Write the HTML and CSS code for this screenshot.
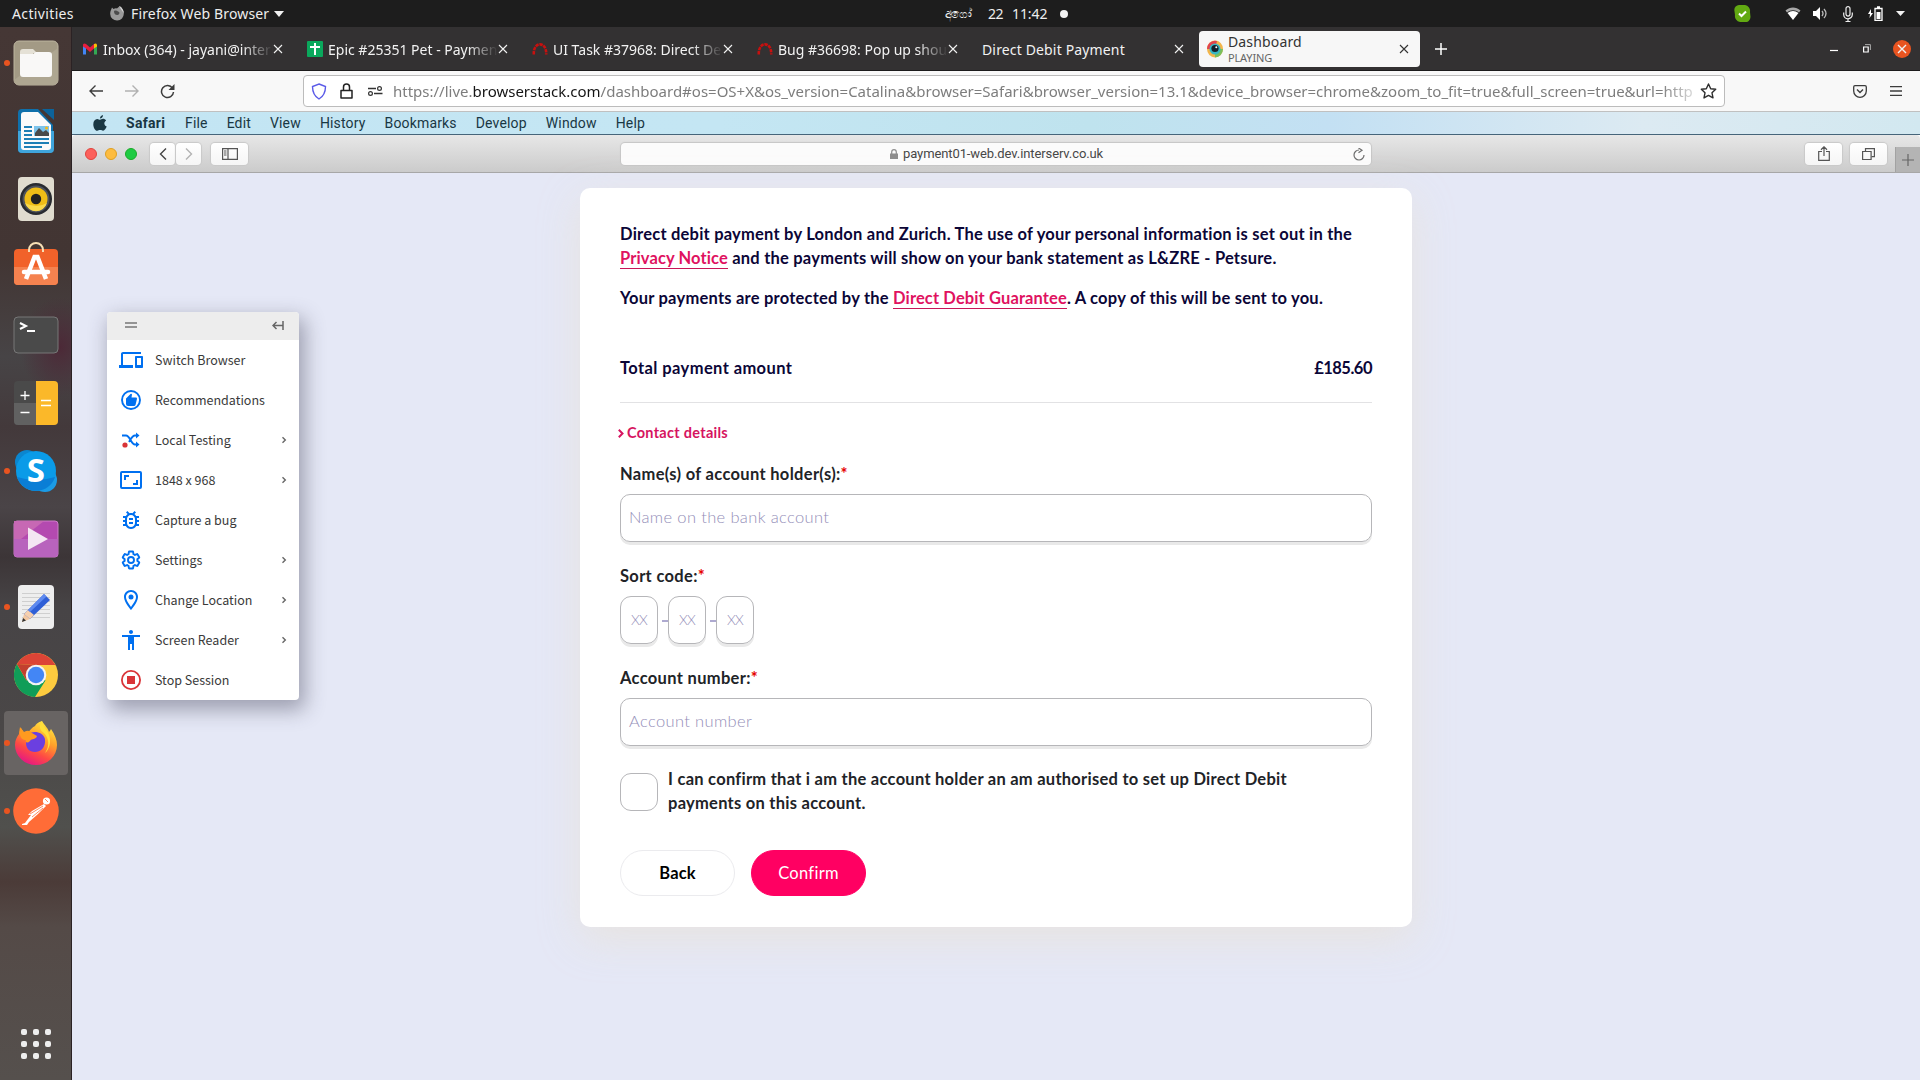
FILE: index.html
```html
<!DOCTYPE html>
<html lang="en">
<head>
<meta charset="utf-8">
<title>Dashboard</title>
<link rel="stylesheet" href="styles.css">
</head>
<body>
<div class="desktop">
  <header class="topbar">
    <div class="topbar-left">
      <span class="activities">Activities</span>
      <svg class="ff-mono" width="14" height="15" viewBox="0 0 14 15"><path d="M1 4l1-2.500 1.500 1.500C5 2 6 2 7 2.500 8 1.500 9 1 9.500 0c3 2 4.300 4.500 4.300 7.500A6.800 6.800 0 0 1 .2 8C.2 6.500.5 5 1 4z" fill="#9a9a9a"/><path d="M4 5c1.500-.8 3-.5 4 .5 2 .3 2 3-.5 3.500C5 9 4 7.500 4 5z" fill="#4c4c4c"/><path d="M9.500 0c3 2 4.300 4.500 4.300 7.500C13 5 11 4.500 9.500 0z" fill="#d5d5d5"/></svg>
      <span class="appname">Firefox Web Browser</span>
      <svg width="10" height="6" viewBox="0 0 10 6"><path d="M0 0h10L5 6z" fill="#f2f2f2"/></svg>
    </div>
    <div class="clock"><span class="month">අගෝ</span><span>22</span><span>11:42</span><i class="notify"></i></div>
    <div class="tray">
      <svg class="t-skype" width="17" height="17" viewBox="0 0 17 17"><path d="M5 0h6a6 6 0 0 1 5 7l.5 5a5 5 0 0 1-6 5H6a6 6 0 0 1-5-7L.3 5A5 5 0 0 1 5 0z" fill="#62a912"/><path d="M5 8.500l2.500 2.500L12 6.500" stroke="#fff" stroke-width="2" fill="none"/></svg>
      <svg class="t-wifi" width="16" height="13" viewBox="0 0 16 13"><path d="M.5 3.500C5-.5 11-.5 15.500 3.500L14 5.500c-3.500-3-8.500-3-12 0z" fill="#a8a8a8"/><path d="M2.500 6c3.300-2.700 7.700-2.700 11 0L8 13z" fill="#fff"/></svg>
      <svg class="t-vol" width="15" height="13" viewBox="0 0 15 13"><path d="M0 4h3l4-4v13L3 9H0z" fill="#fff"/><path d="M9 4q2 2.500 0 5M11 2q4 4.500 0 9" stroke="#bbb" stroke-width="1.300" fill="none"/></svg>
      <svg class="t-mic" width="10" height="16" viewBox="0 0 10 16"><rect x="3" y=".6" width="4" height="9.500" rx="2" fill="none" stroke="#eee" stroke-width="1.200"/><path d="M.7 6.500v2a4.300 4.300 0 0 0 8.600 0v-2M5 13v3M2.500 15.500h5" fill="none" stroke="#eee" stroke-width="1.200"/></svg>
      <svg class="t-bat" width="15" height="15" viewBox="0 0 15 15"><path d="M3 3L0 8h2l-.5 4L5 7H3z" fill="#fff"/><path d="M7 2.500h7v12H7zM9 1h3" stroke="#fff" stroke-width="1.300" fill="none"/><path d="M8.500 6h4v7h-4z" fill="#fff"/></svg>
      <svg width="9" height="5" viewBox="0 0 9 5"><path d="M0 0h9L4.500 5z" fill="#f2f2f2"/></svg>
    </div>
  </header>

  <div class="below">
    <nav class="dock">
      <div class="dock-item running"><svg width="46" height="46" viewBox="0 0 46 46"><rect x="1" y="1" width="44" height="44" rx="5" fill="#a39a85" stroke="#bdb5a0"/><path d="M1 40L45 8v32a5 5 0 0 1-5 5H6a5 5 0 0 1-5-5z" fill="#aea691"/><path d="M7 12q0-3 3-3h10l4 4h-4v4H7z" fill="#e5e1d6"/><path d="M7 14h13l3-2h13q3 0 3 3v19q0 3-3 3H10q-3 0-3-3z" fill="#f9f8f7"/></svg></div>
      <div class="dock-item"><svg width="38" height="46" viewBox="0 0 38 46"><path d="M5 1h16l15 16v24a4 4 0 0 1-4 4H5a4 4 0 0 1-4-4V5a4 4 0 0 1 4-4z" fill="#0f70ab"/><path d="M1 23h36v18a4 4 0 0 1-4 4H5a4 4 0 0 1-4-4z" fill="#3fa5dc"/><path d="M25 1h12v11z" fill="#0c639a"/><path d="M7 4h14l13 13v22q0 3-3 3H7q-3 0-3-3V7q0-3 3-3z" fill="#fafafa"/><path d="M7 19h8M7 23h8M7 27h8M7 31h25M7 35h25M7 39h18" stroke="#1d7fb6" stroke-width="2"/><path d="M17 18h15v10H17z" fill="#7cc4ec"/><path d="M18 28v-3l4-5 4 4 3-2 3 3v3z" fill="#4a4a4a"/><circle cx="29.500" cy="20" r="1.500" fill="#f6b918"/></svg></div>
      <div class="dock-item"><svg width="38" height="46" viewBox="0 0 38 46"><rect x="1" y="1" width="36" height="44" rx="4" fill="#e0dccf"/><circle cx="19" cy="23" r="16" fill="#282b30"/><circle cx="19" cy="23" r="13.500" fill="#4d525c"/><circle cx="19" cy="23" r="11.500" fill="#eebd17"/><path d="M8 27a11.500 11.500 0 0 0 22 0q-10 6-22 0z" fill="#f9d94b"/><circle cx="19" cy="23" r="5.200" fill="#222"/></svg></div>
      <div class="dock-item software"><svg width="46" height="46" viewBox="0 0 46 46"><rect x="1" y="8" width="44" height="36" rx="4" fill="#f1622a"/><path d="M1 26h44v14a4 4 0 0 1-4 4H5a4 4 0 0 1-4-4z" fill="#f5824f"/><path d="M16 11V9a7 7 0 0 1 14 0v2" fill="none" stroke="#f7dfb5" stroke-width="2"/><path d="M13 38l8.500-22h3L33 38" fill="none" stroke="#fff" stroke-width="4.500"/><path d="M11 31h24" stroke="#fff" stroke-width="4.500" stroke-linecap="round"/></svg></div>
      <div class="dock-item"><svg width="46" height="38" viewBox="0 0 46 38"><rect x="1" y="1" width="44" height="36" rx="4" fill="#4a4a4a" stroke="#777"/><path d="M7 7l6 3-6 3M14 15h8" fill="none" stroke="#fff" stroke-width="2"/></svg></div>
      <div class="dock-item"><svg width="46" height="46" viewBox="0 0 46 46"><rect x="1" y="1" width="44" height="44" rx="4" fill="#4a4a4a"/><path d="M1 23h22v22H5a4 4 0 0 1-4-4z" fill="#616161"/><path d="M23 1h18a4 4 0 0 1 4 4v36a4 4 0 0 1-4 4H23z" fill="#fbb829"/><path d="M12 11v9M7.500 15.500h9M7.500 32.500h9M28 20.500h10M28 25.500h10" stroke="#fff" stroke-width="1.300"/></svg></div>
      <div class="dock-item running"><svg class="skype" width="44" height="44" viewBox="0 0 44 44"><circle cx="13" cy="13" r="12" fill="#0b86cf"/><circle cx="31" cy="31" r="12" fill="#1b9be6"/><circle cx="22" cy="22" r="20" fill="#0a9be8"/><path d="M3 28a20 20 0 0 0 38 0q-19 6-38 0z" fill="#0a7ed6"/><text x="22" y="33" class="skype-s">S</text></svg></div>
      <div class="dock-item"><svg width="46" height="38" viewBox="0 0 46 38"><rect x="1" y="1" width="44" height="36" rx="3" fill="#b44ab0" stroke="#cf7fc9"/><path d="M1 1h30L8 19H1z" fill="#c768b4"/><path d="M1 19h44v15a3 3 0 0 1-3 3H4a3 3 0 0 1-3-3z" fill="#b863bd"/><path d="M15 7.500l20 11.500-20 11z" fill="#f4e6f3"/></svg></div>
      <div class="dock-item running"><svg width="38" height="46" viewBox="0 0 38 46"><rect x="1" y="1" width="36" height="44" rx="4" fill="#eee"/><path d="M5 9.500h28M5 13.500h28M5 17.500h28M5 21.500h28M5 25.500h28M5 29.500h28M5 33.500h28" stroke="#cfcfcf"/><path d="M5 38l2-8 6 5z" fill="#f3c7a0"/><path d="M5 38l1-4 3 2.500z" fill="#333"/><path d="M7 30L27 10l6 6-20 19z" fill="#2f5fd6"/><path d="M7 30l4-4 6 5-4 4z" fill="#f6cfae"/><path d="M11 26l16-16 2.500 2.500L13 28z" fill="#5e8af0"/></svg></div>
      <div class="dock-item"><svg width="46" height="46" viewBox="0 0 46 46"><circle cx="23" cy="23" r="22" fill="#fdcb3f"/><path d="M3.900 12A22 22 0 0 0 22 45L32.500 28.500 23 23 13.500 28.500z" fill="#109d58"/><path d="M3.900 12A22 22 0 0 1 42.500 13H23z" fill="#dc4436"/><path d="M3.900 12L13.500 28.500 23 13z" fill="#c2402f"/><circle cx="23" cy="23" r="10.300" fill="#f3f3f3"/><circle cx="23" cy="23" r="8.200" fill="#4386f5"/></svg></div>
      <div class="dock-item running current"><svg width="44" height="46" viewBox="0 0 44 46"><defs><linearGradient id="ffg" x1=".8" y1="0" x2=".3" y2="1"><stop offset="0" stop-color="#fff044"/><stop offset=".4" stop-color="#ffa02a"/><stop offset=".7" stop-color="#ff4a44"/><stop offset="1" stop-color="#e31587"/></linearGradient></defs><path d="M28 1c3 5 6 7 7 11 1-1 2-3 2-3 4 6 6 11 6 16a21 20 0 0 1-42 0c0-5 2-8 4-11 0-2 1-4 2-6l3 5c1 0 2-1 4-1 2-1 4-5 7-6 1-2 3-4 7-5z" fill="url(#ffg)"/><path d="M14 14c6-4 15-2 17 5 1 9-5 13-10 13-6 0-9-4-9-9z" fill="#6b3fe0"/><path d="M6 7l4 5q5-3 8 1l5 3c-1 4-5 2-7 5-3 3-5 1-4-1C8 21 4 15 6 7z" fill="#ff9a1f"/><path d="M28 1c1 8 9 10 8 22-1 7-5 10-5 10 5-7 4-15-1-20-5-3-5-8-2-12z" fill="#ffe03a"/></svg></div>
      <div class="dock-item running"><svg width="46" height="46" viewBox="0 0 46 46"><circle cx="23" cy="23" r="22.800" fill="#ff6c37"/><circle cx="33.500" cy="13" r="3.600" fill="#fff"/><path d="M31 16L19 23l-4 4 3 0-6 8-3 1v1h5l2-3 9-8 8-8z" fill="#fff"/><path d="M17 26l13-8M19 29l11-9M32 11l3 3" stroke="#ff6c37" stroke-width=".8"/></svg></div>
      <div class="dock-grid"><i></i><i></i><i></i><i></i><i></i><i></i><i></i><i></i><i></i></div>
    </nav>

    <main class="window">
      <div class="tabs">
        <div class="tab"><svg class="fav" width="16" height="16" viewBox="0 0 16 16"><path d="M1 4v9.500h3V6z" fill="#4285f4"/><path d="M15 4v9.500h-3V6z" fill="#34a853"/><path d="M1 3.500Q2 2 4 3l4 3.500L12 3v4.500l-4 3.500-4-3.500-3-2z" fill="#ea1d3d"/><path d="M12 3q2-1 3 .5v2l-3 2z" fill="#fbbc04"/></svg><span class="tab-text fade">Inbox (364) - jayani@interblo</span><svg class="x" viewBox="0 0 8 8"><path d="M0 0l8 8M8 0L0 8"/></svg></div>
        <div class="tab"><svg class="fav" width="16" height="16" viewBox="0 0 16 16"><rect width="16" height="16" rx="1" fill="#0aa85c"/><path d="M8 2v12M3 6h10" stroke="#fff" stroke-width="2"/></svg><span class="tab-text fade">Epic #25351 Pet - Payment</span><svg class="x" viewBox="0 0 8 8"><path d="M0 0l8 8M8 0L0 8"/></svg></div>
        <div class="tab"><svg class="fav" width="16" height="16" viewBox="0 0 16 16"><path d="M1.800 13.500C1 0 15 0 14.200 13.500" fill="none" stroke="#c8100f" stroke-width="2.600" stroke-dasharray="3.400 .8"/></svg><span class="tab-text fade">UI Task #37968: Direct Debit</span><svg class="x" viewBox="0 0 8 8"><path d="M0 0l8 8M8 0L0 8"/></svg></div>
        <div class="tab"><svg class="fav" width="16" height="16" viewBox="0 0 16 16"><path d="M1.800 13.500C1 0 15 0 14.200 13.500" fill="none" stroke="#c8100f" stroke-width="2.600" stroke-dasharray="3.400 .8"/></svg><span class="tab-text fade">Bug #36698: Pop up should</span><svg class="x" viewBox="0 0 8 8"><path d="M0 0l8 8M8 0L0 8"/></svg></div>
        <div class="tab plain"><span class="tab-text">Direct Debit Payment</span><svg class="x" viewBox="0 0 8 8"><path d="M0 0l8 8M8 0L0 8"/></svg></div>
        <div class="tab active"><svg class="fav" width="16" height="18" viewBox="0 0 16 18"><ellipse cx="8" cy="9" rx="8" ry="8.500" fill="#f3b54a"/><path d="M0 9a8 8.500 0 0 1 10-8L8 9z" fill="#e2434d"/><path d="M16 9a8 8.500 0 0 1-8 8.500V9z" fill="#7ac05c"/><circle cx="8" cy="9" r="5.500" fill="#38b6c4"/><circle cx="8" cy="8.500" r="3.600" fill="#14202a"/><circle cx="9.300" cy="7.200" r="1" fill="#fff"/></svg><div class="tab-double"><span class="tab-text">Dashboard</span><span class="playing">PLAYING</span></div><svg class="x" viewBox="0 0 8 8"><path d="M0 0l8 8M8 0L0 8"/></svg></div>
        <svg class="newtab" width="12" height="12" viewBox="0 0 12 12"><path d="M6 0v12M0 6h12" stroke="#fff" stroke-width="1.500"/></svg>
        <div class="winctl">
          <svg width="8" height="10" viewBox="0 0 8 10"><path d="M0 6.500h8" stroke="#fff" stroke-width="1.200"/></svg>
          <svg width="8" height="9" viewBox="0 0 8 9"><path d="M.6 3h4.600v5H.6z" fill="none" stroke="#fff" stroke-width="1.200"/><path d="M2 .6h5.400V6" fill="none" stroke="#aaa"/></svg>
          <span class="close"><svg class="x" viewBox="0 0 8 8"><path d="M0 0l8 8M8 0L0 8"/></svg></span>
        </div>
      </div>

      <div class="toolbar">
        <svg class="nav-back" width="14" height="12" viewBox="0 0 14 12"><path d="M14 6H1M6.500.5L1 6l5.500 5.500" fill="none" stroke="#3c3c3c" stroke-width="1.400"/></svg>
        <svg class="nav-fwd" width="14" height="12" viewBox="0 0 14 12"><path d="M0 6h13M7.500.5L13 6l-5.500 5.500" fill="none" stroke="#b1b1b1" stroke-width="1.400"/></svg>
        <svg class="nav-reload" width="15" height="15" viewBox="0 0 15 15"><path d="M12.500 4.200A6 6 0 1 0 13.500 8" fill="none" stroke="#3c3c3c" stroke-width="1.500"/><path d="M14.500 0v6h-6z" fill="#3c3c3c"/></svg>
        <div class="urlbar">
          <svg width="16" height="17" viewBox="0 0 16 17"><path d="M8 1l6.500 2.500C14.500 9 13 13 8 16 3 13 1.500 9 1.500 3.500z" fill="none" stroke="#5b5be8" stroke-width="1.400"/></svg>
          <svg class="u-lock" width="13" height="16" viewBox="0 0 13 16"><path d="M1 7.500h11v7.500H1zM3.500 7V4a3 3 0 0 1 6 0v3" fill="none" stroke="#222" stroke-width="1.500" stroke-linejoin="round"/></svg>
          <svg class="u-perm" width="15" height="10" viewBox="0 0 15 10"><path d="M0 2.500h8M6 7.500h8.500" stroke="#333" stroke-width="1.500"/><circle cx="11.500" cy="2.500" r="1.900" fill="none" stroke="#333" stroke-width="1.200"/><circle cx="2.500" cy="7.500" r="1.900" fill="none" stroke="#333" stroke-width="1.200"/></svg>
          <span class="url">https://live.<b>browserstack.com</b>/dashboard#os=OS+X&amp;os_version=Catalina&amp;browser=Safari&amp;browser_version=13.1&amp;device_browser=chrome&amp;zoom_to_fit=true&amp;full_screen=true&amp;url=http</span>
          <svg width="17" height="16" viewBox="0 0 17 16"><path d="M8.500 1l2.200 4.700 5 .6-3.700 3.500 1 5.100-4.500-2.500L4 14.900l1-5.100L1.300 6.300l5-.6z" fill="none" stroke="#2d2d2d" stroke-width="1.400" stroke-linejoin="round"/></svg>
        </div>
        <div class="tool-right">
          <svg width="14" height="13" viewBox="0 0 14 13"><path d="M2 .7h10q1.300 0 1.300 1.300v4a6.300 6.300 0 0 1-12.600 0V2Q.7.700 2 .7z" fill="none" stroke="#3c3c3c" stroke-width="1.300"/><path d="M4 4.500l3 3 3-3" fill="none" stroke="#3c3c3c" stroke-width="1.400"/></svg>
          <svg width="12" height="10" viewBox="0 0 12 10"><path d="M0 .7h12M0 5h12M0 9.300h12" stroke="#3c3c3c" stroke-width="1.300"/></svg>
        </div>
      </div>

      <div class="macmenu">
        <svg width="14" height="16" viewBox="0 0 14 16"><path d="M10 0c0 2-1.300 3.600-3 3.600C6.900 1.800 8.300.3 10 0zM7 4.700c.8 0 1.600-.9 3-.9 1.200 0 2.400.6 3.100 1.700-2.600 1.600-2.200 5 .6 6.100-.8 2-2.100 4.200-3.600 4.200-1.100 0-1.500-.7-2.900-.7s-1.800.7-2.900.7C2 15.800.3 12.300.3 9.200c0-3.200 1.800-5.300 3.900-5.300 1.200 0 2.200.8 2.800.8z" fill="#193743"/></svg>
        <b>Safari</b><span>File</span><span>Edit</span><span>View</span><span>History</span><span>Bookmarks</span><span>Develop</span><span>Window</span><span>Help</span>
      </div>

      <div class="safari-bar">
        <div class="lights"><i class="red"></i><i class="yellow"></i><i class="green"></i></div>
        <div class="sbtns">
          <span class="sbtn sm"><svg width="8" height="12" viewBox="0 0 8 12"><path d="M7 .5L1.500 6 7 11.500" fill="none" stroke="#444" stroke-width="1.400"/></svg></span><span class="sbtn sm"><svg width="8" height="12" viewBox="0 0 8 12"><path d="M1 .5L6.500 6 1 11.500" fill="none" stroke="#b2b2b2" stroke-width="1.400"/></svg></span>
        </div>
        <span class="sbtn"><svg width="16" height="12" viewBox="0 0 16 12"><path d="M.6.6h14.800v10.800H.6zM6 .6v10.800" fill="none" stroke="#555" stroke-width="1.200"/><path d="M2 3h2.500M2 5h2.500M2 7h2.500" stroke="#555"/></svg></span>
        <div class="address">
          <svg width="8" height="10" viewBox="0 0 8 10"><path d="M0 4.500h8V10H0z" fill="#8e8e8e"/><path d="M1.700 5V3a2.300 2.300 0 0 1 4.600 0v2" fill="none" stroke="#8e8e8e" stroke-width="1.200"/></svg>
          <span>payment01-web.dev.interserv.co.uk</span>
          <svg class="reload" width="12" height="13" viewBox="0 0 12 13"><path d="M6 2a5 5 0 1 0 5 5" fill="none" stroke="#6e6e6e" stroke-width="1.200"/><path d="M5.500 0L9 2.200 5.500 4.700" fill="none" stroke="#6e6e6e" stroke-width="1.200"/></svg>
        </div>
        <div class="safari-right">
          <span class="sbtn"><svg width="12" height="15" viewBox="0 0 12 15"><path d="M4 5.500H.7v8.800h10.600V5.500H8M6 10V1M3 3.700L6 .8l3 2.900" fill="none" stroke="#555" stroke-width="1.200"/></svg></span>
          <span class="sbtn"><svg width="13" height="12" viewBox="0 0 13 12"><path d="M.6 3.500h8.500v8H.6z" fill="none" stroke="#555" stroke-width="1.200"/><path d="M3.500 3V.6h8.900v8H9.500" fill="none" stroke="#555" stroke-width="1.200"/></svg></span>
          <span class="splus"><svg width="12" height="12" viewBox="0 0 12 12"><path d="M6 0v12M0 6h12" stroke="#666" stroke-width="1.200"/></svg></span>
        </div>
      </div>

      <div class="page">
        <section class="card">
          <p>Direct debit payment by London and Zurich. The use of your personal information is set out in the <a>Privacy Notice</a> and the payments will show on your bank statement as L&amp;ZRE - Petsure.</p>
          <p class="second">Your payments are protected by the <a>Direct Debit Guarantee</a>. A copy of this will be sent to you.</p>
          <div class="total"><span>Total payment amount</span><span class="amount">£185.60</span></div>
          <div class="contact"><svg width="6" height="9" viewBox="0 0 6 9"><path d="M.8.8l3.700 3.700L.8 8.200" fill="none" stroke="#d6145f" stroke-width="2"/></svg><span>Contact details</span></div>
          <label>Name(s) of account holder(s):<em>*</em></label>
          <div class="field">Name on the bank account</div>
          <label>Sort code:<em>*</em></label>
          <div class="sort"><div class="field box">XX</div><i></i><div class="field box">XX</div><i></i><div class="field box">XX</div></div>
          <label>Account number:<em>*</em></label>
          <div class="field">Account number</div>
          <div class="confirm"><span class="check"></span><span>I can confirm that i am the account holder an am authorised to set up Direct Debit<br>payments on this account.</span></div>
          <div class="buttons"><span class="btn">Back</span><span class="btn primary">Confirm</span></div>
        </section>

        <aside class="panel">
          <div class="panel-head"><svg width="12" height="6" viewBox="0 0 12 6"><path d="M0 1h12M0 5h12" stroke="#777" stroke-width="1.600"/></svg><svg width="12" height="9" viewBox="0 0 12 9"><path d="M11 0v9M11 4.500H1M4.500 1L1 4.500 4.500 8" fill="none" stroke="#666" stroke-width="1.500"/></svg></div>
          <div class="row"><svg viewBox="0 0 24 24"><path d="M4 6h18V4H4c-1.100 0-2 .9-2 2v11H0v3h14v-3H4V6zm19 2h-6c-.550 0-1 .450-1 1v10c0 .550.450 1 1 1h6c.550 0 1-.450 1-1V9c0-.550-.450-1-1-1zm-1 9h-4v-7h4v7z"/></svg><span>Switch Browser</span></div>
          <div class="row"><svg viewBox="0 0 24 24"><circle cx="12" cy="12" r="9" fill="none" stroke="#0070f0" stroke-width="1.900"/><path d="M7 10.500L11.500 6q1-.8 1.500.5l-.5 3H17q1 0 1 1.200L16.500 17q-.4 1-1.500 1H9q-2 0-2-2z"/></svg><span>Recommendations</span></div>
          <div class="row"><svg viewBox="0 0 24 24"><path d="M3 7.500h4c4 0 5 9 9 9h3M10 14c2-3 3-6.500 6-6.500h3" fill="none" stroke="#0070f0" stroke-width="1.900"/><path d="M17 4.500l3.500 3-3.500 3zM17 13.500l3.500 3-3.500 3z"/><circle class="redfill" cx="6" cy="17" r="2.600"/></svg><span>Local Testing</span><svg class="chev" viewBox="0 0 4 6"><path d="M.5.300L3.300 3 .5 5.700"/></svg></div>
          <div class="row"><svg viewBox="0 0 24 24"><rect x="2" y="4" width="20" height="16" rx="1" fill="none" stroke="#0070f0" stroke-width="2"/><path d="M5 7h5v2H7v3H5zM19 17h-5v-2h3v-3h2z"/></svg><span>1848 x 968</span><svg class="chev" viewBox="0 0 4 6"><path d="M.5.300L3.300 3 .5 5.700"/></svg></div>
          <div class="row"><svg viewBox="0 0 24 24"><path d="M20 8h-2.810c-.45-.78-1.070-1.450-1.820-1.960L17 4.410 15.590 3l-2.170 2.170C12.960 5.060 12.490 5 12 5s-.96.060-1.410.170L8.410 3 7 4.410l1.620 1.630C7.880 6.550 7.260 7.220 6.810 8H4v2h2.090c-.05.33-.09.66-.09 1v1H4v2h2v1c0 .34.040.67.090 1H4v2h2.810c1.040 1.790 2.970 3 5.190 3s4.150-1.210 5.190-3H20v-2h-2.090c.05-.33.090-.66.090-1v-1h2v-2h-2v-1c0-.34-.04-.67-.09-1H20V8zm-4 4v3c0 2.210-1.790 4-4 4s-4-1.790-4-4v-4c0-2.210 1.790-4 4-4s4 1.790 4 4v1zm-6 2h4v2h-4v-2zm0-4h4v2h-4v-2z"/></svg><span>Capture a bug</span></div>
          <div class="row"><svg viewBox="0 0 24 24"><path d="M19.430 12.980c.04-.32.070-.64.070-.98s-.03-.66-.07-.98l2.110-1.650c.19-.15.240-.42.120-.64l-2-3.460c-.12-.22-.39-.3-.61-.22l-2.490 1c-.52-.4-1.080-.73-1.690-.98l-.38-2.650C14.460 2.180 14.250 2 14 2h-4c-.25 0-.46.180-.49.420l-.38 2.650c-.61.250-1.170.590-1.690.980l-2.490-1c-.23-.09-.49 0-.61.220l-2 3.460c-.13.220-.07.490.120.640l2.110 1.650c-.04.320-.07.650-.07.980s.030.660.070.980l-2.110 1.650c-.19.150-.24.420-.12.640l2 3.460c.12.220.390.300.610.220l2.490-1c.520.400 1.080.730 1.690.980l.380 2.650c.030.240.240.420.490.420h4c.250 0 .460-.180.490-.420l.380-2.650c.610-.250 1.170-.590 1.690-.980l2.490 1c.230.090.490 0 .610-.220l2-3.460c.120-.220.070-.490-.120-.640z" transform="translate(1.800 1.800) scale(.85)" fill="none" stroke="#0070f0" stroke-width="2.200"/><circle cx="12" cy="12" r="3" fill="none" stroke="#0070f0" stroke-width="1.900"/></svg><span>Settings</span><svg class="chev" viewBox="0 0 4 6"><path d="M.5.300L3.300 3 .5 5.700"/></svg></div>
          <div class="row"><svg viewBox="0 0 24 24"><path d="M12 2C8.130 2 5 5.130 5 9c0 5.250 7 13 7 13s7-7.750 7-13c0-3.870-3.130-7-7-7zM7 9c0-2.760 2.240-5 5-5s5 2.240 5 5c0 2.880-2.880 7.190-5 9.880C9.920 16.210 7 11.850 7 9z"/><circle cx="12" cy="9" r="2.500"/></svg><span>Change Location</span><svg class="chev" viewBox="0 0 4 6"><path d="M.5.300L3.300 3 .5 5.700"/></svg></div>
          <div class="row"><svg viewBox="0 0 24 24"><path d="M12 2c1.100 0 2 .9 2 2s-.9 2-2 2-2-.9-2-2 .9-2 2-2zm9 7h-6v13h-2v-6h-2v6H9V9H3V7h18v2z"/></svg><span>Screen Reader</span><svg class="chev" viewBox="0 0 4 6"><path d="M.5.300L3.300 3 .5 5.700"/></svg></div>
          <div class="row"><svg class="stop" viewBox="0 0 24 24"><circle cx="12" cy="12" r="9.100" fill="none" stroke="#d93438" stroke-width="1.800"/><path d="M8 8h8v8H8z"/></svg><span>Stop Session</span></div>
        </aside>
      </div>
    </main>
  </div>
</div>
</body>
</html>
```
FILE: styles.css
```css
* { box-sizing: border-box; }
body { margin: 0; overflow: hidden; }
svg { display: block; flex: none; }
.desktop { width: 1920px; height: 1080px; display: flex; flex-direction: column; font: 14px/20px "Noto Sans", sans-serif; letter-spacing: .15px; }

/* system bar */
.topbar { height: 27px; background: #1d1d1d; color: #eee; display: grid; grid-template-columns: 945px 1fr auto; align-items: center; white-space: nowrap; }
.topbar-left { display: flex; align-items: center; padding-left: 12px; }
.activities { width: 98px; letter-spacing: .36px; }
.ff-mono { margin-right: 7px; }
.appname { width: 143px; }
.clock { display: flex; align-items: center; height: 25px; }
.clock .month { font-size: 12px; width: 43px; letter-spacing: -.8px; }
.clock span:nth-child(2) { width: 24px; letter-spacing: -.4px; }
.clock span:nth-child(3) { width: 48px; letter-spacing: -.1px; }
.notify { width: 8px; height: 8px; border-radius: 50%; background: #f2f2f2; }
.tray { display: flex; align-items: center; padding-right: 15px; }
.t-skype { margin-right: 34px; }
.t-wifi { margin-right: 12px; }
.t-vol { margin-right: 15px; }
.t-mic { margin-right: 15px; }
.t-bat { margin-right: 13px; }

.below { flex: 1; display: flex; min-height: 0; }

/* launcher */
.dock { width: 72px; flex: none; padding-top: 4px; display: flex; flex-direction: column; gap: 4px; align-items: center; border-right: 1px solid #2b2224; background: radial-gradient(ellipse 40px 50px at 60px 320px, #4c2937, transparent), linear-gradient(#453735 0, #423533 230px, #474446 330px, #43393b 400px, #4a4447 480px, #3c3537 530px, #474446 580px, #4a4747 700px, #50504d 800px, #4b3b38 855px, #544a47 900px, #55504d 1053px); }
.dock-item { width: 64px; height: 64px; display: flex; align-items: center; justify-content: center; position: relative; border-radius: 4px; }
.dock-item.software { align-items: flex-start; padding-top: 6px; }
.dock-item.current { background: #686463; }
.dock-item.running::before { content: ""; position: absolute; left: 0; top: 29px; width: 6px; height: 6px; border-radius: 50%; background: #e95420; }
.skype { overflow: visible; }
.skype-s { font: 700 33px "Open Sans", sans-serif; fill: #fff; text-anchor: middle; }
.dock-grid { display: grid; grid-template-columns: repeat(3, 6px); gap: 6px; margin: auto 0 21px; }
.dock-grid i { width: 6px; height: 6px; border-radius: 2px; background: #eee; }

.window { flex: 1; min-width: 0; display: flex; flex-direction: column; }

/* browser tabs */
.tabs { height: 44px; background: #333132; border-bottom: 1px solid #1c1b1c; display: flex; align-items: center; color: #f2f2f2; white-space: nowrap; padding-left: 10px; }
.tab { width: 225px; display: flex; align-items: center; }
.fav { margin-right: 5px; }
.tab-text { overflow: hidden; padding-top: 1px; line-height: 21px; }
.tab .tab-text.fade { width: 170px; margin-right: 1px; letter-spacing: 0; -webkit-mask-image: linear-gradient(90deg, #000 82%, transparent 100%); mask-image: linear-gradient(90deg, #000 82%, transparent 100%); }
.x { width: 8px; height: 8px; overflow: visible; fill: none; stroke: currentColor; stroke-width: 1.1px; }
.tab.plain { width: 217px; }
.tab.plain .tab-text { width: 193px; }
.tab.active { width: 221px; height: 36px; border-radius: 4px; background: #f7f7f7; color: #333; padding-left: 8px; }
.tab.active .fav { margin-right: 5px; }
.tab-double { width: 172px; display: flex; flex-direction: column; }
.tab-double .tab-text { line-height: 18px; padding: 0; }
.playing { font-size: 11px; line-height: 13px; letter-spacing: -.15px; color: #666; }
.newtab { margin-left: 15px; }
.winctl { margin-left: auto; padding-right: 9px; display: flex; align-items: center; }
.winctl > svg { margin-right: 25px; }
.winctl > svg + svg { margin-right: 22px; }
.close { width: 18px; height: 18px; border-radius: 50%; background: #e95420; display: flex; align-items: center; justify-content: center; }
.close .x { stroke-width: 1.4px; }

/* navigation bar */
.toolbar { height: 41px; background: #f8f8f8; border-bottom: 1px solid #c0c0c0; display: flex; align-items: center; padding-left: 17px; }
.nav-fwd { margin-left: 22px; }
.nav-reload { margin-left: 21px; }
.urlbar { width: 1422px; height: 32px; margin-left: 128px; border: 1px solid #bcbcbc; border-radius: 4px; background: #fff; display: flex; align-items: center; padding-left: 7px; }
.u-lock { margin-left: 13px; }
.u-perm { margin: 0 10px 0 15px; }
.url { width: 1300px; margin-right: 7px; overflow: hidden; white-space: nowrap; font-size: 15px; letter-spacing: 0; color: #7d7d7d; -webkit-mask-image: linear-gradient(90deg, #000 97.5%, transparent 101%); mask-image: linear-gradient(90deg, #000 97.5%, transparent 101%); }
.url b { font-weight: 400; color: #151515; }
.tool-right { margin-left: auto; padding-right: 18px; display: flex; align-items: center; gap: 23px; }

/* mac menu bar */
.macmenu { height: 23px; border-bottom: 1px solid #46657a; background: linear-gradient(90deg, #c3e5f3, #c4e6f3 35%, #bfe3ee 55%, #c3e0f3 68%, #dceaf2 85%, #d2e8f0); display: flex; align-items: center; padding-left: 21px; font: 400 14px/20px Roboto, sans-serif; letter-spacing: .16px; color: #193743; }
.macmenu b { margin: 0 0 0 19px; width: 40px; letter-spacing: .3px; }
.macmenu span { margin-left: 19px; }

/* Safari toolbar */
.safari-bar { height: 38px; background: linear-gradient(#e7e7e7, #cbcbcb); border-bottom: 1px solid #a7a7a7; border-radius: 4px 4px 0 0; display: flex; align-items: center; padding-left: 13px; }
.lights { display: flex; gap: 8px; }
.lights i { width: 12px; height: 12px; border-radius: 50%; border: 1px solid #e0443e; background: #fc605b; }
.lights .yellow { background: #fdbc40; border-color: #dfa023; }
.lights .green { background: #1ecb43; border-color: #1aab29; }
.sbtns { display: flex; gap: 1px; margin: 0 10px 0 13px; }
.sbtn { width: 37px; height: 22px; border-radius: 4px; background: linear-gradient(#fff, #f5f5f5); box-shadow: 0 0 1px 1px #c9c9c9; display: flex; align-items: center; justify-content: center; }
.sbtn.sm { width: 25px; }
.address { width: 750px; height: 22px; margin-left: 373px; border-radius: 4px; background: #fbfbfb; box-shadow: 0 0 1px 1px #c6c6c6; display: flex; align-items: center; padding: 1px 0 0 269px; gap: 5px; font: 400 13px/20px Roboto, sans-serif; letter-spacing: -.1px; color: #474747; }
.reload { margin: 0 6px 0 auto; }
.safari-right { margin-left: auto; height: 100%; display: flex; align-items: center; gap: 8px; }
.splus { align-self: flex-end; width: 25px; height: 25px; background: #b4b4b4; border-left: 1px solid #a2a2a2; display: flex; align-items: center; justify-content: center; }

/* payment page */
.page { flex: 1; background: #e5e8f6; position: relative; padding: 15px 0 0 508px; }
.card { width: 832px; height: 739px; background: #fff; border-radius: 10px; box-shadow: 0 12px 40px rgba(232, 226, 216, .75); padding: 34px 40px 0; font: 700 16.5px/24px Lato, sans-serif; letter-spacing: .22px; color: #0b0637; white-space: nowrap; }
.card p { margin: 0; white-space: normal; }
.card p.second { margin-top: 16px; }
.card a { color: #e0125f; border-bottom: 1px solid #c91558; letter-spacing: .12px; }
.total { display: flex; justify-content: space-between; margin-top: 46px; height: 47px; border-bottom: 1px solid #e2e2e4; letter-spacing: .4px; }
.amount { letter-spacing: -.5px; }
.contact { height: 24px; margin: 18px 0 17px -2px; display: flex; align-items: center; gap: 3px; font-size: 14.5px; letter-spacing: .28px; color: #d6145f; }
.card label { display: block; letter-spacing: .32px; color: #212327; }
.card em { color: #e60000; font-style: normal; }
.field { height: 48px; margin: 8px 0 22px; padding-left: 8px; border: 1px solid #b6b6b9; border-radius: 10px; box-shadow: 0 3px 0 #e9e9e9; font-weight: 300; line-height: 44px; letter-spacing: .36px; color: #938eb8; }
.sort { display: flex; align-items: center; margin: 8px 0 22px; }
.sort i { width: 6px; height: 2px; margin: 2px 0 0 4px; background: #aeaad0; }
.field.box { width: 38px; margin: 0; padding: 0; text-align: center; font-size: 14px; line-height: 45px; letter-spacing: -.8px; border-radius: 11px; }
.confirm { display: flex; align-items: center; gap: 10px; color: #212327; line-height: 24px; margin-top: -1px; letter-spacing: .26px; }
.check { width: 38px; height: 38px; flex: none; margin-top: 1px; border: 1px solid #b6b6b9; border-radius: 11px; }
.buttons { display: flex; gap: 16px; margin-top: 35px; }
.btn { width: 115px; height: 46px; border: 1px solid #ebebee; border-radius: 23px; line-height: 44px; text-align: center; color: #000; letter-spacing: .1px; }
.btn.primary { background: #ff0062; border-color: #ff0062; color: #fff; font-weight: 400; letter-spacing: .3px; }

/* floating session panel */
.panel { position: absolute; z-index: 1; left: 35px; top: 139px; width: 192px; height: 388px; border-radius: 4px; background: #fff; box-shadow: 4px 8px 20px 2px rgba(60, 60, 80, .42); font: 400 12.5px/20px "Noto Sans CJK SC", sans-serif; letter-spacing: 0; color: #3a3a3a; }
.panel-head { height: 28px; background: #ededed; border-radius: 4px 4px 0 0; display: flex; align-items: center; justify-content: space-between; padding: 0 15px 2px 18px; }
.row { height: 40px; display: flex; align-items: center; padding: 0 13px 0 12px; }
.row > svg:first-child { width: 24px; height: 24px; fill: #0070f0; }
.row > svg.stop:first-child { fill: #d93438; }
.row .redfill { fill: #d93438; }
.row span { flex: 1; margin-left: 12px; }
.row .chev { width: 4px; height: 6px; overflow: visible; fill: none; stroke: #666; stroke-width: 1.4px; }
```
